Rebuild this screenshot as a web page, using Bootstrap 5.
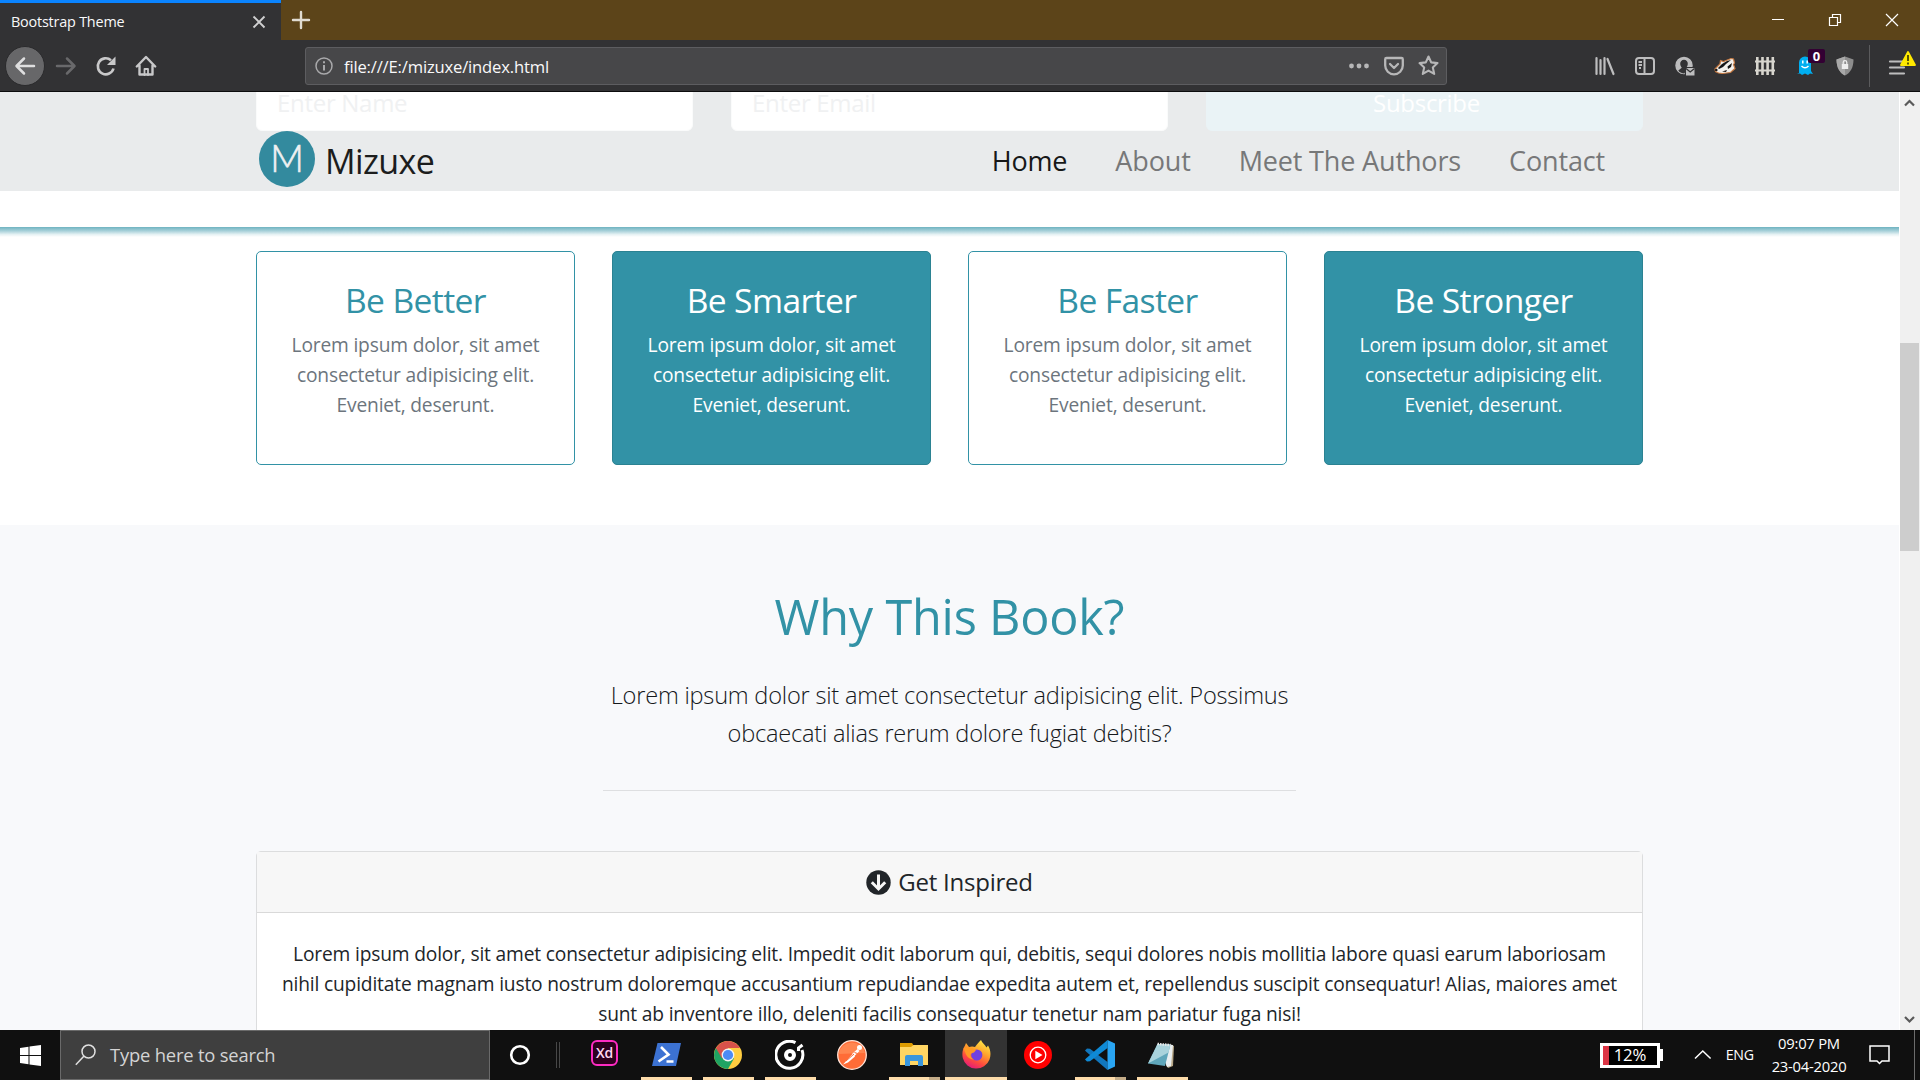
<!DOCTYPE html>
<html lang="en">
<head>
<meta charset="utf-8">
<meta name="viewport" content="width=device-width, initial-scale=1">
<title>Bootstrap Theme</title>
<link href="https://cdn.jsdelivr.net/npm/bootstrap@5.3.0/dist/css/bootstrap.min.css" rel="stylesheet">
<style>
:root{--teal:#3292a6}
body{width:1920px;height:1080px;overflow:hidden;font-family:"Open Sans","Noto Sans",sans-serif;color:#212529;font-size:19.2px;letter-spacing:-.17px;line-height:30px}
svg{display:block;flex:none}
/* browser chrome */
.titlebar{height:40px;background:#5c4419}
.tab-active{width:281px;height:41px;background:#323234;border-top:3px solid #0a84ff;color:#f9f9fa;font-size:14.4px;letter-spacing:-.2px;padding:0 15px 0 11px}
.win-ctl{width:56.5px;height:40px}
.toolbar{height:52px;background:#323234;border-bottom:1px solid #0c0c0d;padding-left:5px}
.tool-slot{width:40px;height:50px}
.back-btn{width:40px;height:40px;margin-right:1px;background:#676769;border:1px solid #2a2a2c}
.urlbar{width:1142px;height:38px;margin-left:139px;background:#474749;border:1px solid #5d5d60;border-radius:3px;padding:0 0 0 9px;color:#f9f9fa;font-size:16.6px}
.url-text{margin:2px 0 0 11px}
.url-ico{width:35px}
.tool-end{margin-right:4px}
.chrome-rule{width:1px;height:42px;background:#5b5b5d}
.ghost-count{left:23px;top:8px;width:17px;height:14px;background:#330033;color:#fff;font:bold 13px/14px "Open Sans",sans-serif;border-radius:2px}
/* page */
.viewport-row{height:938px}
.page{width:1899px;background:#fff;overflow:hidden}
.wrap{width:1387px;margin:0 auto}
.band{background:#e9ebec;height:99px}
.form-strip{height:39px}
.form-strip .field{height:60px;border-radius:6px;margin-top:-21px;padding:0 20px;width:437px;font-size:24px;letter-spacing:-.3px;line-height:62px;background:#fff;color:#f0f1f2;border:1px solid #fafbfb}
.form-strip .subscribe{background:#eaf3f6;color:#fff;border-color:#eaf3f6;text-align:center;padding:0 18px 0 22px}
.logo-mark{margin-left:3px}
.brand-name{font-size:34px;letter-spacing:-.6px;line-height:61px;color:#1c1d1d;margin-left:10px}
.site-nav{gap:48px;padding-right:38px;font-size:27px;letter-spacing:-.15px;line-height:60px}
.site-nav a{color:#777879;text-decoration:none}
.site-nav a.active{color:#171818}
.white-gap{height:36px}
.shade{height:10px;background:linear-gradient(#6fb3c1,#a9d1da 40%,#e6f2f4 75%,#fff)}
.boxes{padding-top:14px;height:288px}
.box-grid{grid-template-columns:repeat(4,1fr);gap:37px}
.feature{height:214px;border:1px solid var(--teal);border-radius:5px;padding:24px 20px;text-align:center;color:#6c757d;background:#fff}
.feature h3{font-size:33.6px;letter-spacing:-.6px;line-height:42px;margin:3px 0 9px;font-weight:400;color:var(--teal)}
.feature.solid,.feature.solid h3{background:var(--teal);color:#fff}
.feature.solid{border-color:#2b8292}
.why{background:#f8f9fb;padding-top:60px;height:505px;text-align:center}
.why h1{font-size:48.6px;letter-spacing:-.2px;line-height:60px;margin:1px 0 30px;font-weight:400;color:var(--teal)}
.why .intro{font-size:23.6px;letter-spacing:-.22px;line-height:38px;font-weight:300;width:693px;margin:0 auto;height:114px;color:#15181b}
.why .rule{width:693px;height:1px;background:#dedfe1;margin:0 auto 60px}
.accordion-card{border:1px solid #dcddde;border-radius:5px 5px 0 0;background:#fff;height:220px}
.accordion-head{height:61px;background:#f7f7f7;border-bottom:1px solid #d9d9d9;font-size:24px;letter-spacing:-.22px;gap:7px}
.accordion-text{padding-top:26px;white-space:nowrap}
.scroller{width:21px;background:#f0f0f0;border-left:1px solid #fff}
.thumb{width:19px;height:208px;background:#cdcdcd;margin-top:229px}
/* taskbar */
.taskbar{height:50px;background:#101010;color:#fff}
.start{width:60px}
.search{width:430px;background:#3f3f3f;border:1px solid #6a6a6a;color:#d4d4d4;font-size:18.4px;letter-spacing:-.2px;padding-left:14px;gap:14px}
.gap-cell{width:83px}
.app{width:62px;height:50px;padding-top:2px}
.app .run{height:3px;width:51px;background:#fddcaa}
.app.stack .run{border-right:11px solid #c4ac88}
.app.current{background:#333}
.app.current .run{width:62px}
.app .pic{height:45px}
.tray{font-size:14.2px}
.battery{width:60px;height:25px;border:3px solid #fff;background:#000;font-size:16.8px;line-height:18px}
.charge{width:6px;background:#dc3545;margin-right:5px}
.caret-up{margin-left:31px}
.lang{margin-left:14px}
.clock{width:80px;line-height:23px;font-size:14.8px;letter-spacing:-.25px;margin-left:15px}
.notes{margin:0 24px 0 20px}
.edge{width:1px;height:50px;margin-right:5px;background:#6c6c6c}
</style>
</head>
<body>
<header>
  <div class="titlebar d-flex align-items-start">
    <div class="tab-active d-flex align-items-center justify-content-between">
      <span>Bootstrap Theme</span>
      <svg width="14" height="14" viewBox="0 0 14 14" stroke="#d0d0d1" stroke-width="1.9"><path d="M1.5 1.5l11 11M12.5 1.5l-11 11"/></svg>
    </div>
    <svg class="mt-1" style="margin-left:7px" width="26" height="32" viewBox="0 0 26 32" stroke="#e0dcd2" stroke-width="2.4" stroke-linecap="round"><path d="M5 16h16M13 8v16"/></svg>
    <div class="d-flex ms-auto">
      <div class="win-ctl d-flex align-items-center justify-content-center"><svg width="14" height="14" stroke="#fff"><path d="M0 6.500h12"/></svg></div>
      <div class="win-ctl d-flex align-items-center justify-content-center"><svg width="14" height="14" fill="none" stroke="#fff" stroke-width="1.2"><path d="M1.500 4.500h8v8h-8zM4.500 4.500v-3h8v8h-3"/></svg></div>
      <div class="win-ctl d-flex align-items-center justify-content-center"><svg width="14" height="14" stroke="#fff" stroke-width="1.2"><path d="M1 1l12 12M13 1L1 13"/></svg></div>
    </div>
  </div>
  <div class="toolbar d-flex align-items-center">
    <div class="back-btn rounded-circle d-flex align-items-center justify-content-center"><svg width="22" height="22" viewBox="0 0 22 22" fill="none" stroke="#dededf" stroke-width="2.5" stroke-linecap="round" stroke-linejoin="round"><path d="M20 11H3M10 3.500L2.500 11l7.500 7.500"/></svg></div>
    <div class="tool-slot d-flex align-items-center justify-content-center"><svg width="22" height="22" viewBox="0 0 22 22" fill="none" stroke="#69696b" stroke-width="2.5" stroke-linecap="round" stroke-linejoin="round"><path d="M2 11h17M12 3.500l7.500 7.500-7.500 7.500"/></svg></div>
    <div class="tool-slot d-flex align-items-center justify-content-center"><svg width="22" height="22" viewBox="0 0 22 22" fill="none" stroke="#c8c8c9" stroke-width="2.6"><path d="M18.500 13.500A8 8 0 1 1 16 5.200"/><path d="M20.500 1.500v8.500h-8.500z" fill="#c8c8c9" stroke="none"/></svg></div>
    <div class="tool-slot d-flex align-items-center justify-content-center"><svg width="22" height="22" viewBox="0 0 22 22" fill="none" stroke="#c8c8c9" stroke-width="2.400" stroke-linejoin="round" stroke-linecap="round"><path d="M1.800 11.500L11 2l9.200 9.500M4.500 10.500v9h13v-9"/><path d="M9.500 20v-6h3.500v6" stroke-width="1.800"/></svg></div>
    <div class="urlbar d-flex align-items-center">
      <svg width="18" height="18" viewBox="0 0 18 18" fill="none" stroke="#a9a9ab" stroke-width="1.500"><circle cx="9" cy="9" r="8"/><path d="M9 8v5.500M9 4.300v2" stroke-width="2"/></svg>
      <span class="url-text">file:///E:/mizuxe/index.html</span>
      <div class="d-flex ms-auto">
        <div class="url-ico d-flex align-items-center justify-content-center"><svg width="20" height="20" fill="#b7b7b8"><circle cx="2.500" cy="10" r="2.400"/><circle cx="10" cy="10" r="2.400"/><circle cx="17.500" cy="10" r="2.400"/></svg></div>
        <div class="url-ico d-flex align-items-center justify-content-center"><svg width="20" height="20" viewBox="0 0 20 20" fill="none" stroke="#b7b7b8" stroke-width="2.300" stroke-linecap="round" stroke-linejoin="round"><path d="M2.500 2h15q1.300 0 1.300 1.300V9.500a8.800 8.800 0 0 1-17.600 0V3.300Q1.200 2 2.500 2zM6 8l4 4 4-4"/></svg></div>
        <div class="url-ico d-flex align-items-center justify-content-center"><svg width="21" height="21" viewBox="0 0 21 21" fill="none" stroke="#b7b7b8" stroke-width="2.100" stroke-linejoin="round"><path d="M10.500 1.500l2.700 5.900 6.300.7-4.700 4.300 1.400 6.500-5.700-3.300-5.700 3.300 1.400-6.500L1.500 8.100l6.300-.7z"/></svg></div>
      </div>
    </div>
    <div class="d-flex ms-auto align-items-center tool-end">
      <div class="tool-slot d-flex align-items-center justify-content-center"><svg width="20" height="20" viewBox="0 0 20 20" stroke="#bdbdbe" stroke-width="2.200" stroke-linecap="round"><path d="M1.500 2v16M5.500 4v14M9.500 2v16M12.500 3l6 15"/></svg></div>
      <div class="tool-slot d-flex align-items-center justify-content-center"><svg width="20" height="18" viewBox="0 0 20 18" fill="none" stroke="#bdbdbe" stroke-width="2"><rect x="1" y="1" width="18" height="16" rx="3"/><path d="M9.500 1v16M3.500 5h3.500M3.500 8h3.500M4 11h2"/></svg></div>
      <div class="tool-slot d-flex align-items-center justify-content-center"><svg width="20" height="20" viewBox="0 0 20 20"><circle cx="9" cy="9.500" r="8" fill="#bdbdbe" stroke="#bdbdbe" stroke-width="1.500"/><path d="M9 3.800a3.800 3.800 0 0 1 3.800 4c0 2-1 3.200-1.600 4l-.7 3.200-1 2.500Q5 17 3.300 14.500l3.500-2.700C5.800 10.500 5.200 9.400 5.200 7.800A3.800 3.800 0 0 1 9 3.800z" fill="#323234"/><path d="M10 11h10v9H10z" fill="#323234"/><path d="M11 12h8.500v7.500H11z" fill="#bdbdbe"/><path d="M11 12.500l4.200 3.500 4.300-3.500" fill="none" stroke="#323234" stroke-width="1.300"/></svg></div>
      <div class="tool-slot d-flex align-items-center justify-content-center"><svg width="22" height="18" viewBox="0 0 22 18"><path d="M1.500 14.500L1 12l5-5 .5-3.500 3 1L17 1.500l2.500.5 1 4-1 1.500 1.500 4-4.500 4-8 1-4-.5z" fill="#f4f1ec" stroke="#c97b42" stroke-width="1.200"/><path d="M4 11l4-4 5-3 4-1-5 4-3 3-4 2zM13.500 9.500l4.500-3.500-1 4-3 2zM8 14.500l5-1.500-1 2z" fill="#161616"/><circle cx="2.300" cy="13" r="1.300" fill="#161616"/></svg></div>
      <div class="tool-slot d-flex align-items-center justify-content-center"><svg width="20" height="20" viewBox="0 0 20 20" stroke="#d7d5ce" stroke-width="2.600"><path d="M2.300 1v18M7.500 1v18M12.600 1v18M17.800 1v18"/><path d="M0 5.500h20M0 14.500h20" stroke-width="1.800"/></svg></div>
      <div class="tool-slot d-flex align-items-center justify-content-center position-relative"><svg width="16" height="19" viewBox="0 0 16 19"><path d="M2 17V6.500a6 6 0 0 1 12 0V15l2 3-3-.5-2 1.500-3-1.500-3 1.500-2-1.500-3 .5z" fill="#00aef0"/><path d="M5.800 4.500v3M10.200 4.500v3M4.500 10q3.500 3.500 7 0" fill="none" stroke="#fff" stroke-width="1.500"/></svg><span class="ghost-count position-absolute text-center">0</span></div>
      <div class="tool-slot d-flex align-items-center justify-content-center"><svg width="18" height="20" viewBox="0 0 18 20"><path d="M9 .5l8.500 3C17.500 12 14 17 9 19.500 4 17 .5 12 .5 3.500z" fill="#8d8d8d"/><path d="M9 .5v19C4 17 .5 12 .5 3.500z" fill="#a8a8a8"/><path d="M5.800 8h6.400v5H5.800z" fill="#eee"/><path d="M7.200 8V6.500a1.800 1.800 0 0 1 3.600 0V8" fill="none" stroke="#eee" stroke-width="1.300"/></svg></div>
      <div class="chrome-rule ms-1"></div>
      <svg class="ms-3" width="30" height="30" viewBox="0 0 30 30"><path d="M4 10.500h14M4 16.500h14M4 22.500h14" stroke="#bdbdbe" stroke-width="2.200" stroke-linecap="round"/><path d="M22 1l7 13H15z" fill="#ffe900" stroke="#ffe900" stroke-width="1.800" stroke-linejoin="round"/><path d="M22 4v6M22 11.500v2" stroke="#3c3c00" stroke-width="1.700"/></svg>
    </div>
  </div>
</header>

<div class="viewport-row d-flex">
  <main class="page">
    <div class="band">
      <div class="wrap form-strip d-flex justify-content-between">
        <div class="field">Enter Name</div>
        <div class="field">Enter Email</div>
        <div class="field subscribe">Subscribe</div>
      </div>
      <nav class="wrap d-flex">
        <svg class="logo-mark" width="56" height="57" viewBox="0 0 56 57"><circle cx="28" cy="28" r="28" fill="#338a9e"/><text x="28" y="40.500" text-anchor="middle" font-family="Lato" font-weight="300" font-size="37" fill="#eef0f1" stroke="#eef0f1" stroke-width=".6">M</text></svg>
        <span class="brand-name">Mizuxe</span>
        <div class="site-nav d-flex ms-auto"><a class="active" href="#">Home</a><a href="#">About</a><a href="#">Meet The Authors</a><a href="#">Contact</a></div>
      </nav>
    </div>
    <div class="white-gap"></div>
    <div class="shade"></div>
    <section class="boxes">
      <div class="wrap box-grid d-grid">
        <div class="feature"><h3>Be Better</h3>Lorem ipsum dolor, sit amet<br>consectetur adipisicing elit.<br>Eveniet, deserunt.</div>
        <div class="feature solid"><h3>Be Smarter</h3>Lorem ipsum dolor, sit amet<br>consectetur adipisicing elit.<br>Eveniet, deserunt.</div>
        <div class="feature"><h3>Be Faster</h3>Lorem ipsum dolor, sit amet<br>consectetur adipisicing elit.<br>Eveniet, deserunt.</div>
        <div class="feature solid"><h3>Be Stronger</h3>Lorem ipsum dolor, sit amet<br>consectetur adipisicing elit.<br>Eveniet, deserunt.</div>
      </div>
    </section>
    <section class="why">
      <h1>Why This Book?</h1>
      <div class="intro">Lorem ipsum dolor sit amet consectetur adipisicing elit. Possimus<br>obcaecati alias rerum dolore fugiat debitis?</div>
      <div class="rule"></div>
      <div class="wrap accordion-card">
        <div class="accordion-head d-flex align-items-center justify-content-center">
          <svg width="25" height="25" viewBox="0 0 25 25"><circle cx="12.500" cy="12.500" r="12.200" fill="#212529"/><path d="M12.500 4.500v14M5.800 12.300l6.700 6.700 6.700-6.700" fill="none" stroke="#f7f7f7" stroke-width="3"/></svg>
          <span>Get Inspired</span>
        </div>
        <div class="accordion-text">Lorem ipsum dolor, sit amet consectetur adipisicing elit. Impedit odit laborum qui, debitis, sequi dolores nobis mollitia labore quasi earum laboriosam<br>nihil cupiditate magnam iusto nostrum doloremque accusantium repudiandae expedita autem et, repellendus suscipit consequatur! Alias, maiores amet<br>sunt ab inventore illo, deleniti facilis consequatur tenetur nam pariatur fuga nisi!</div>
      </div>
    </section>
  </main>
  <aside class="scroller d-flex flex-column">
    <svg class="mt-1" width="19" height="18" fill="none" stroke="#5a5a5a" stroke-width="2.200"><path d="M5 9.500L9.500 5l4.500 4.500"/></svg>
    <div class="thumb"></div>
    <svg class="mt-auto" width="19" height="18" fill="none" stroke="#5a5a5a" stroke-width="2.200"><path d="M5 5l4.500 4.500L14 5"/></svg>
  </aside>
</div>

<footer class="taskbar d-flex align-items-stretch">
  <div class="start d-flex align-items-center justify-content-center"><svg width="21" height="21" viewBox="0 0 21 21" fill="#fff"><path d="M0 3l8.500-1.200V10H0zM9.500 1.600L21 0v10H9.500zM0 11h8.500v8.200L0 18zM9.500 11H21v10L9.500 19.400z"/></svg></div>
  <div class="search d-flex align-items-center"><svg width="21" height="22" viewBox="0 0 21 22" fill="none" stroke="#e0e0e0" stroke-width="1.500"><circle cx="13.500" cy="7.500" r="6.500"/><path d="M8.800 12.200L.8 20.800"/></svg><span>Type here to search</span></div>
  <div class="gap-cell"><svg width="83" height="50"><circle cx="30" cy="25" r="8.800" fill="none" stroke="#fff" stroke-width="2.600"/><path d="M66.500 12v26M69.500 12v26" stroke="#484848"/></svg></div>
  <div class="app d-flex flex-column align-items-center"><div class="pic d-flex align-items-center"><svg class="mb-1" width="27" height="26" viewBox="0 0 27 26"><rect x="1" y="1" width="25" height="24" rx="5" fill="#2e001e" stroke="#ff2bc2" stroke-width="2"/><text x="13.500" y="18" text-anchor="middle" font-family="Open Sans" font-weight="600" font-size="14" fill="#ffd9f2">Xd</text></svg></div></div>
  <div class="app d-flex flex-column align-items-center"><div class="pic d-flex align-items-center"><svg width="29" height="23" viewBox="0 0 29 23"><path d="M5.500 0H29l-5 23H0z" fill="#3c72d2"/><path d="M9 4l7.500 7.500L6.500 18.500M14.500 18.500h7" fill="none" stroke="#fff" stroke-width="2.600"/></svg></div><div class="run"></div></div>
  <div class="app d-flex flex-column align-items-center"><div class="pic d-flex align-items-center"><svg width="28" height="28" viewBox="0 0 28 28"><circle cx="14" cy="14" r="14" fill="#ffcd40"/><path d="M14 14L1.900 7A14 14 0 0 1 26.100 7H14z" fill="#d8524a"/><path d="M1.900 7A14 14 0 0 0 14 28L20 17.500 14 14z" fill="#1fa463"/><path d="M1.900 7L8 17.500 14 7z" fill="#d8524a"/><circle cx="14" cy="14" r="6.400" fill="#f4f4f4"/><circle cx="14" cy="14" r="5.100" fill="#4c8bf5"/></svg></div><div class="run"></div></div>
  <div class="app d-flex flex-column align-items-center"><div class="pic d-flex align-items-center"><svg width="30" height="30" viewBox="0 0 30 30" fill="none" stroke="#fff"><path d="M27 10A13.500 13.500 0 1 1 20.500 2.700" stroke-width="3"/><path d="M23.500 11V8l4-3" stroke-width="3"/><circle cx="15" cy="15" r="4" stroke-width="4"/></svg></div><div class="run"></div></div>
  <div class="app d-flex flex-column align-items-center"><div class="pic d-flex align-items-center"><svg width="30" height="30" viewBox="0 0 30 30"><circle cx="15" cy="15" r="14.300" fill="#ff6c37" stroke="#ffe4d8" stroke-width="1.300"/><path d="M1.500 14A13.500 13.500 0 0 1 28 13z" fill="#ff8650"/><path d="M6 24.500L15.500 14l2.500 2.500-7 6z" fill="#fff"/><path d="M15 14l5.500-5 2 2-5.500 5.500z" fill="#fff"/><circle cx="22.500" cy="7.500" r="2.500" fill="#fff"/><path d="M9 21l8-7M17.500 12.500l3 1" stroke="#f26b3a"/></svg></div></div>
  <div class="app stack d-flex flex-column align-items-center"><div class="pic d-flex align-items-center"><svg width="28" height="23" viewBox="0 0 28 23"><path d="M0 0h12l2 3-2 3H0z" fill="#dd9b00"/><path d="M0 4h11l2.500-2H28v20H0z" fill="#ffd563"/><path d="M5 23V14q0-2 2-2h14q2 0 2 2v9h-5v-5h-8v5z" fill="#3a96dd"/></svg></div><div class="run"></div></div>
  <div class="app current d-flex flex-column align-items-center"><div class="pic d-flex align-items-center"><svg width="29" height="29" viewBox="0 0 29 29"><defs><linearGradient id="ff" x1=".8" y1="0" x2=".3" y2="1"><stop offset="0" stop-color="#fff14a"/><stop offset=".4" stop-color="#ffa22b"/><stop offset=".72" stop-color="#ff4b3e"/><stop offset="1" stop-color="#e3187d"/></linearGradient></defs><path d="M19 0c1 3 4 4.500 5.500 7.500L26 5.500c2.500 4 3.300 9 1.500 14A14 14 0 0 1 .8 18C-.2 13.500.6 9 3 5.500L4 3l3 4c2-.8 4.500-.7 6 0 2-3 4-5 6-7z" fill="url(#ff)"/><circle cx="14.800" cy="15" r="5.600" fill="#7141e0"/><path d="M1.500 8q6-2 12.500 2l-2 2.500q-4 .5-3.500 3 .5 3 4 4-6 0-8.500-5z" fill="#ff9a24"/></svg></div><div class="run"></div></div>
  <div class="app d-flex flex-column align-items-center"><div class="pic d-flex align-items-center"><svg width="28" height="28" viewBox="0 0 28 28"><circle cx="14" cy="14" r="14" fill="#f00"/><circle cx="14" cy="14" r="7.800" fill="none" stroke="#fff" stroke-width="1.300"/><path d="M11.300 9.700L18.500 14l-7.200 4.300z" fill="#fff"/></svg></div></div>
  <div class="app stack d-flex flex-column align-items-center"><div class="pic d-flex align-items-center"><svg width="30" height="30" viewBox="0 0 30 30"><path d="M0 10.500l2-2 3 .3L22.500 22v8L1.500 12z" fill="#1177bd"/><path d="M0 19.500l2 2 3-.3L22.500 8V0L1.500 18z" fill="#0e8ad6"/><path d="M22.500 0L30 3.500v23L22.500 30z" fill="#29a5f3"/></svg></div><div class="run"></div></div>
  <div class="app d-flex flex-column align-items-center"><div class="pic d-flex align-items-center"><svg width="28" height="26" viewBox="0 0 28 26"><path d="M22 2l4 2-1 20-5 2-2-3z" fill="#b8a888"/><path d="M10 2l15 1-2 21-4 1z" fill="#e9eef0"/><path d="M9.500 2l13 .5L17 24 0 21.500z" fill="#5fa6ba"/><path d="M9.500 2l13 .5-2 8L0 21.500z" fill="#a9d3dc"/><path d="M9.500 2l13 1" stroke="#e8e8e8" stroke-width="2.500" stroke-dasharray="1.500 1"/></svg></div><div class="run"></div></div>
  <div class="tray d-flex align-items-center ms-auto">
    <div class="battery d-flex"><span class="charge"></span><span>12%</span></div>
    <svg width="3" height="12" fill="#fff"><path d="M0 0h3v12H0z"/></svg>
    <svg class="caret-up" width="18" height="12" fill="none" stroke="#fff" stroke-width="1.500"><path d="M1 9.500L8.800 2l7.800 7.500"/></svg>
    <span class="lang">ENG</span>
    <div class="clock text-center">09:07 PM<br>23-04-2020</div>
    <svg class="notes" width="21" height="20" fill="none" stroke="#fff" stroke-width="1.500"><path d="M1 1h19v15h-7l-2.500 2.500L8 16H1z"/></svg>
    <div class="edge"></div>
  </div>
</footer>
<script src="https://cdn.jsdelivr.net/npm/bootstrap@5.3.0/dist/js/bootstrap.bundle.min.js"></script>
</body>
</html>
